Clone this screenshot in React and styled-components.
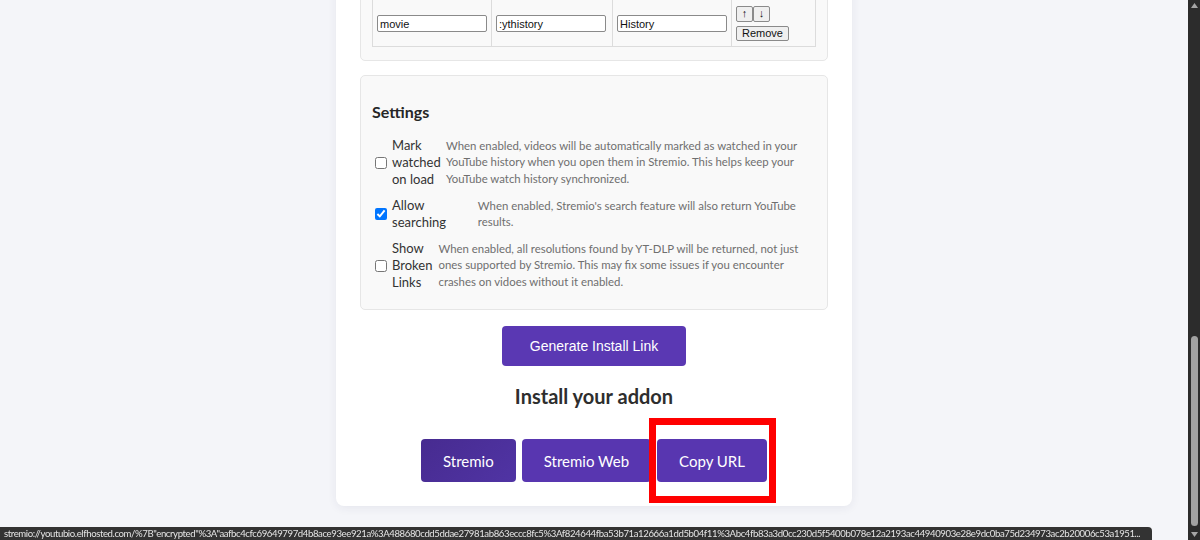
import React from 'react'
import styled, { createGlobalStyle } from 'styled-components'

const GlobalStyle = createGlobalStyle`
html, body {
  margin: 0;
  height: 100%;
  overflow: hidden;
  background: #f4f5f9;
}
#root {
  height: 540px;
}
`;

const Viewport = styled.div`
display: flex;
height: 540px;
width: 1200px;
`;

const Main = styled.div`
flex: 1;
overflow: hidden;
display: flex;
justify-content: center;
align-items: flex-start;
`;

const Card = styled.div`
box-sizing: border-box;
width: 516px;
margin-top: -37px;
padding: 24px;
background: #fff;
border-radius: 8px;
box-shadow: 0 2px 10px rgba(40, 40, 80, 0.07);
display: flex;
flex-direction: column;
align-items: center;
`;

const Section = styled.div`
box-sizing: border-box;
align-self: stretch;
background: #f9f9f9;
border: 1px solid #e6e6e6;
border-radius: 5px;
padding: ${p => (p.$tight ? '11px 11px 13px' : '25px 11px 18px')};
margin-bottom: ${p => (p.$tight ? '14px' : '0')};
`;

const Table = styled.table`
width: 100%;
border-collapse: collapse;
`;

const Cell = styled.td`
box-sizing: border-box;
border: 1px solid #dcdcdc;
padding: 4px;
height: 47px;
width: ${p => p.$w || 'auto'};
vertical-align: middle;
`;

const TextInput = styled.input`
box-sizing: border-box;
width: 110px;
height: 17px;
padding: 0 2px;
font: 11px 'Liberation Sans', Arial, sans-serif;
color: #111;
border: 1px solid #8a8a8a;
border-radius: 2px;
background: #fff;
`;

const SmallButton = styled.button`
box-sizing: border-box;
margin: 0;
height: ${p => (p.$arrow ? '16px' : '15px')};
width: ${p => (p.$arrow ? '17px' : 'auto')};
padding: 0 ${p => (p.$arrow ? '0' : '5px')};
font: 11px 'Liberation Sans', 'DejaVu Sans', Arial, sans-serif;
line-height: 13px;
color: #111;
background: #efefef;
border: 1px solid #8a8a8a;
border-radius: 2px;
`;

const ActionLine = styled.div`
display: flex;
margin-bottom: ${p => (p.$first ? '4px' : '0')};
`;

const Heading = styled.h3`
margin: 0 0 14px;
font: 700 16px/22px Lato, 'Noto Sans', sans-serif;
color: #262626;
`;

const SettingRow = styled.div`
display: flex;
align-items: center;
margin-bottom: ${p => (p.$last ? '0' : '9px')};
`;

const Checkbox = styled.input`
flex-shrink: 0;
width: 12px;
height: 12px;
margin: 0 5px 0 3px;
`;

const SettingLabel = styled.label`
margin-right: 1px;
font: 13px/17px Lato, 'Noto Sans', sans-serif;
color: #333;
`;

const SettingHelp = styled.div`
font: 11.4px/16.5px Lato, 'Noto Sans', sans-serif;
color: #6f6f6f;
`;

const GenerateButton = styled.button`
margin-top: 16px;
width: 184px;
height: 40px;
border: none;
border-radius: 4px;
background: #5a38b3;
color: #fff;
font: 14px 'Liberation Sans', Arial, sans-serif;
`;

const InstallTitle = styled.h3`
margin: 17px 0 30px;
font: 700 20px/26px Lato, 'Noto Sans', sans-serif;
color: #2e2e2e;
`;

const ButtonRow = styled.div`
display: flex;
gap: 6px;
`;

const InstallButton = styled.button`
height: 43px;
padding: 0 22px;
border: none;
border-radius: 4px;
background: ${p => (p.$dark ? 'linear-gradient(135deg, #472b90, #5034a4)' : '#5836b0')};
color: #fff;
font: 15px Lato, 'Noto Sans', sans-serif;
`;

const Highlight = styled.span`
position: relative;
display: inline-flex;
&::after {
  content: '';
  position: absolute;
  top: -21px;
  bottom: -21px;
  left: -8px;
  right: -9px;
  border: 7px solid #ff0000;
  pointer-events: none;
}
`;

const ScrollBar = styled.div`
width: 12px;
background: #2c2c2c;
display: flex;
flex-direction: column;
align-items: center;
`;

const ScrollArrow = styled.svg`
display: block;
margin: 3px 0;
`;

const ScrollTrack = styled.div`
flex: 1;
display: flex;
flex-direction: column;
justify-content: flex-end;
padding-bottom: 3px;
`;

const ScrollThumb = styled.div`
width: 7px;
height: 190px;
border-radius: 4px;
background: #a2a2a2;
`;

const StatusBar = styled.div`
position: fixed;
left: 0;
bottom: 0;
box-sizing: border-box;
width: 1152px;
height: 13px;
padding: 0 4px;
background: #333;
border-top-right-radius: 4px;
color: #e4e4e4;
font: 9.6px/13px Lato, 'Noto Sans', sans-serif;
letter-spacing: -0.4px;
white-space: nowrap;
overflow: hidden;
`;

const settings = [
  {
    label: 'Mark watched on load',
    help: 'When enabled, videos will be automatically marked as watched in your YouTube history when you open them in Stremio. This helps keep your YouTube watch history synchronized.',
    checked: false,
  },
  {
    label: 'Allow searching',
    help: "When enabled, Stremio's search feature will also return YouTube results.",
    checked: true,
  },
  {
    label: 'Show Broken Links',
    help: 'When enabled, all resolutions found by YT-DLP will be returned, not just ones supported by Stremio. This may fix some issues if you encounter crashes on vidoes without it enabled.',
    checked: false,
  },
];

const statusUrl =
  'stremio://youtubio.elfhosted.com/%7B"encrypted"%3A"aafbc4cfc69649797d4b8ace93ee921a%3A488680cdd5ddae27981ab863eccc8fc5%3Af824644fba53b71a12666a1dd5b04f11%3Abc4fb83a3d0cc230d5f5400b078e12a2193ac44940903e28e9dc0ba75d234973ac2b20006c53a1951...';

const App = () => {
  return (
    <>
      <GlobalStyle />
      <Viewport>
        <Main>
          <Card>
            <Section $tight>
              <Table>
                <tbody>
                  <tr>
                    <Cell $w="118px"><TextInput defaultValue="movie" /></Cell>
                    <Cell $w="121px"><TextInput defaultValue=":ythistory" /></Cell>
                    <Cell $w="119px"><TextInput defaultValue="History" /></Cell>
                    <Cell>
                      <ActionLine $first>
                        <SmallButton $arrow>↑</SmallButton>
                        <SmallButton $arrow>↓</SmallButton>
                      </ActionLine>
                      <ActionLine>
                        <SmallButton>Remove</SmallButton>
                      </ActionLine>
                    </Cell>
                  </tr>
                </tbody>
              </Table>
            </Section>

            <Section>
              <Heading>Settings</Heading>
              {settings.map((s, i) => (
                <SettingRow key={s.label} $last={i === settings.length - 1}>
                  <Checkbox type="checkbox" defaultChecked={s.checked} />
                  <SettingLabel>{s.label}</SettingLabel>
                  <SettingHelp>{s.help}</SettingHelp>
                </SettingRow>
              ))}
            </Section>

            <GenerateButton>Generate Install Link</GenerateButton>
            <InstallTitle>Install your addon</InstallTitle>
            <ButtonRow>
              <InstallButton $dark>Stremio</InstallButton>
              <InstallButton>Stremio Web</InstallButton>
              <Highlight>
                <InstallButton>Copy URL</InstallButton>
              </Highlight>
            </ButtonRow>
          </Card>
        </Main>
        <ScrollBar>
          <ScrollArrow width="7" height="5" viewBox="0 0 7 5">
            <path d="M0 5 L3.5 0 L7 5 Z" fill="#a6a6a6" />
          </ScrollArrow>
          <ScrollTrack>
            <ScrollThumb />
          </ScrollTrack>
          <ScrollArrow width="7" height="5" viewBox="0 0 7 5">
            <path d="M0 0 L7 0 L3.5 5 Z" fill="#a6a6a6" />
          </ScrollArrow>
        </ScrollBar>
      </Viewport>
      <StatusBar>{statusUrl}</StatusBar>
    </>
  )
}

export default App
